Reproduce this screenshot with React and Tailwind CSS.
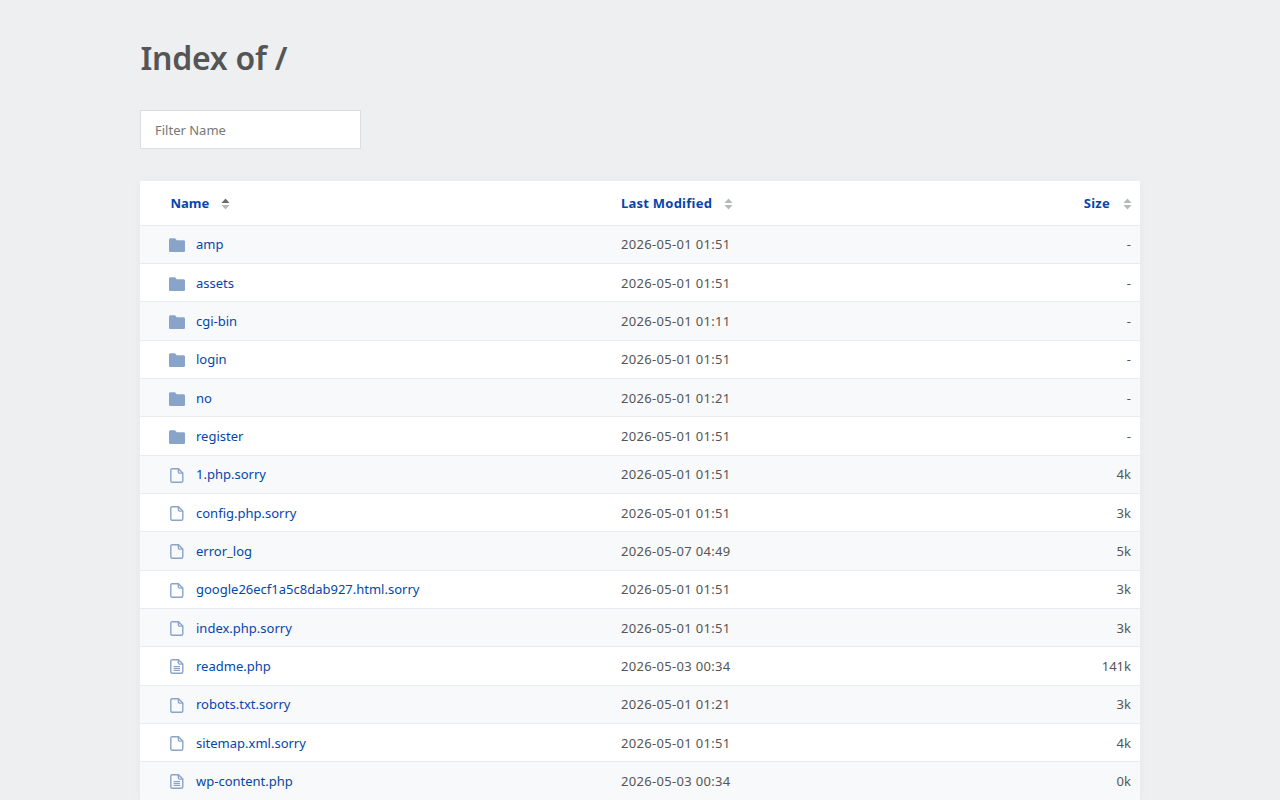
// Directory index listing
const FILES = [
  { name: 'amp', date: '2026-05-01 01:51', size: '-', type: 'folder' },
  { name: 'assets', date: '2026-05-01 01:51', size: '-', type: 'folder' },
  { name: 'cgi-bin', date: '2026-05-01 01:11', size: '-', type: 'folder' },
  { name: 'login', date: '2026-05-01 01:51', size: '-', type: 'folder' },
  { name: 'no', date: '2026-05-01 01:21', size: '-', type: 'folder' },
  { name: 'register', date: '2026-05-01 01:51', size: '-', type: 'folder' },
  { name: '1.php.sorry', date: '2026-05-01 01:51', size: '4k', type: 'file' },
  { name: 'config.php.sorry', date: '2026-05-01 01:51', size: '3k', type: 'file' },
  { name: 'error_log', date: '2026-05-07 04:49', size: '5k', type: 'file' },
  { name: 'google26ecf1a5c8dab927.html.sorry', date: '2026-05-01 01:51', size: '3k', type: 'file' },
  { name: 'index.php.sorry', date: '2026-05-01 01:51', size: '3k', type: 'file' },
  { name: 'readme.php', date: '2026-05-03 00:34', size: '141k', type: 'text' },
  { name: 'robots.txt.sorry', date: '2026-05-01 01:21', size: '3k', type: 'file' },
  { name: 'sitemap.xml.sorry', date: '2026-05-01 01:51', size: '4k', type: 'file' },
  { name: 'wp-content.php', date: '2026-05-03 00:34', size: '0k', type: 'text' },
];

function FileIcon({ type }) {
  if (type === 'folder') {
    return (
      <svg width="16" height="14" viewBox="0 0 16 14" className="block">
        <path d="M1.5 0.3H6L7.8 2.2H14.5C15.3 2.2 16 2.8 16 3.7V12.7C16 13.5 15.3 14 14.5 14H1.5C0.7 14 0 13.5 0 12.7V1.8C0 1 0.7 0.3 1.5 0.3Z" fill="#8aa4c9" />
      </svg>
    );
  }
  return (
    <svg width="14" height="15" viewBox="0 0 14 15" fill="none" stroke="#8aa4c9" strokeWidth="1.4" className="ml-px block">
      <path d="M2.2 0.7H8.4L12.8 5.1V12.8C12.8 13.6 12.2 14.3 11.4 14.3H2.2C1.4 14.3 0.8 13.6 0.8 12.8V2.1C0.8 1.3 1.4 0.7 2.2 0.7Z" />
      <path d="M8.4 0.7V4C8.4 4.6 8.8 5.1 9.4 5.1H12.8" />
      {type === 'text' && <path d="M3.6 7.7H10M3.6 9.6H10M3.6 11.5H10" strokeWidth="1.2" />}
    </svg>
  );
}

function SortIcon({ active }) {
  return (
    <svg width="9" height="12" viewBox="0 0 9 12" className="block">
      <path d="M4.5 0.5L8.5 5H0.5Z" fill={active ? '#6b6b6b' : '#b4b8bf'} />
      <path d="M4.5 11.5L0.5 7H8.5Z" fill="#b4b8bf" />
    </svg>
  );
}

export default function App() {
  return (
    <div className="min-h-screen bg-[#edeff1] font-['Noto_Sans','Open_Sans',sans-serif] text-[13px] text-[#555]">
      <div className="mx-auto w-[1000px]">
        <h1 className="pt-[35px] pl-[0.5px] text-[32px] leading-[46px] font-semibold tracking-[-0.25px] text-[#555]">Index of /</h1>
        <input
          placeholder="Filter Name"
          className="mt-[29px] block h-[39px] w-[221px] border border-[#dcdee0] bg-white px-[14px] text-[13px] placeholder:text-[#777] outline-none"
        />
        <div className="mt-[32px] bg-white shadow-[0_0_10px_rgba(0,0,0,0.03)]">
          <div className="flex h-[44.7px] items-center border-b border-[#e9ebee] pt-[2px] font-bold text-[#0645ad]">
            <div className="flex w-[481px] items-center pl-[30.5px]">
              <span>Name</span>
              <span className="ml-[12px]"><SortIcon active /></span>
            </div>
            <div className="flex flex-1 items-center">
              <span className="tracking-[0.24px]">Last Modified</span>
              <span className="ml-[12px]"><SortIcon /></span>
            </div>
            <div className="flex items-center pr-[8px]">
              <span className="tracking-[0.25px]">Size</span>
              <span className="ml-[13px]"><SortIcon /></span>
            </div>
          </div>
          {FILES.map((f, i) => (
            <div
              key={f.name}
              className={`flex h-[38.33px] items-center border-b border-[#e9ebee] pt-[1.7px] ${i % 2 === 0 ? 'bg-[#f8f9fb]' : 'bg-white'}`}
            >
              <div className="flex w-[481px] items-center pl-[29px]">
                <span className="flex w-[27px]"><FileIcon type={f.type} /></span>
                <a className="text-[#0645ad]">{f.name}</a>
              </div>
              <div className="flex-1 tracking-[0.31px]">{f.date}</div>
              <div className="pr-[9px] text-right">{f.size}</div>
            </div>
          ))}
        </div>
      </div>
    </div>
  );
}
